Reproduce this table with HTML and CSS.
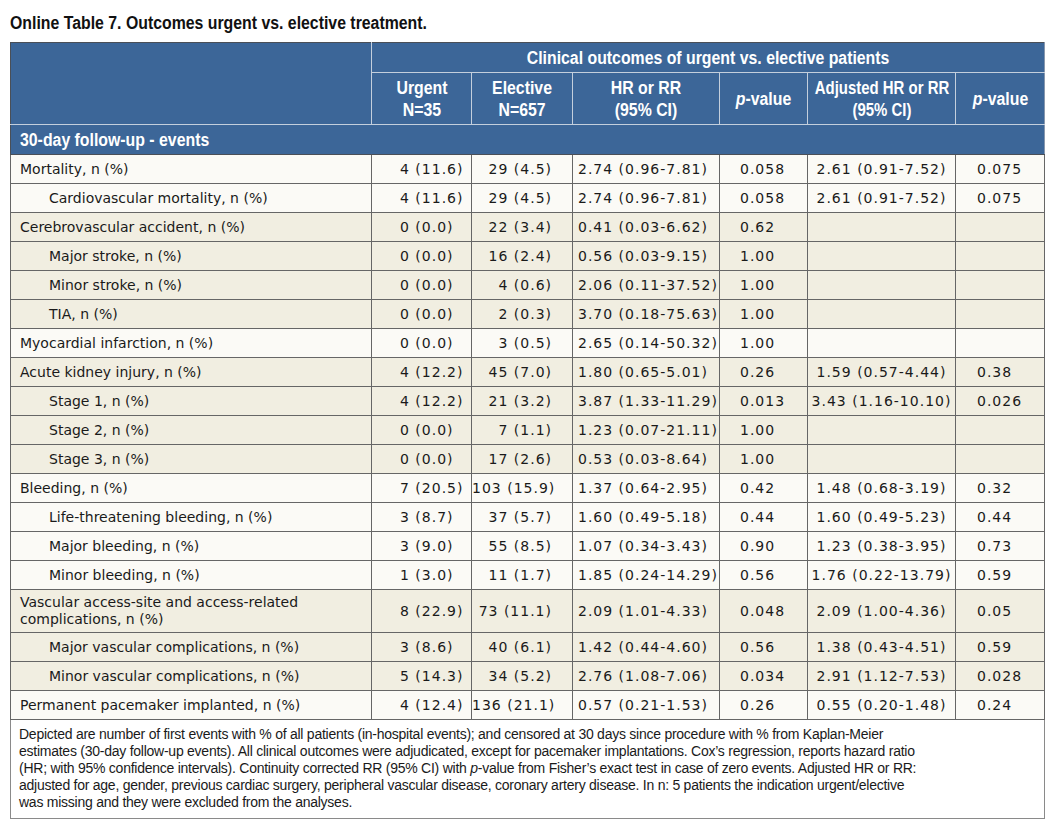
FILE: index.html
```html
<!DOCTYPE html>
<html lang="en">
<head>
<meta charset="utf-8">
<title>Online Table 7</title>
<link rel="stylesheet" href="styles.css">
</head>
<body>
<h1 class="title"><span class="cnd cnd-left">Online Table 7. Outcomes urgent vs. elective treatment.</span></h1>
<table class="outcomes">
  <colgroup>
    <col class="c-label"><col class="c-urg"><col class="c-ele"><col class="c-hr"><col class="c-p"><col class="c-adj"><col class="c-p2">
  </colgroup>
  <thead>
    <tr class="h1">
      <th rowspan="2" class="h-blank"></th>
      <th colspan="6" class="h-group"><span class="cnd">Clinical outcomes of urgent vs. elective patients</span></th>
    </tr>
    <tr class="h2">
      <th><span class="cnd">Urgent<br>N=35</span></th>
      <th><span class="cnd">Elective<br>N=657</span></th>
      <th><span class="cnd">HR or RR<br>(95% CI)</span></th>
      <th><span class="cnd"><i>p</i>-value</span></th>
      <th><span class="cnd cnd-tight">Adjusted HR or RR<br>(95% CI)</span></th>
      <th class="h-last"><span class="cnd"><i>p</i>-value</span></th>
    </tr>
  </thead>
  <tbody>
    <tr class="section"><td colspan="7"><span class="cnd cnd-left">30-day follow-up - events</span></td></tr>

    <tr class="light"><td class="lbl">Mortality, n (%)</td><td class="urg">4 (11.6)</td><td class="ele">29 (4.5)</td><td class="hr">2.74 (0.96-7.81)</td><td class="pv">0.058</td><td class="adj">2.61 (0.91-7.52)</td><td class="pv2">0.075</td></tr>
    <tr class="light"><td class="lbl sub">Cardiovascular mortality, n (%)</td><td class="urg">4 (11.6)</td><td class="ele">29 (4.5)</td><td class="hr">2.74 (0.96-7.81)</td><td class="pv">0.058</td><td class="adj">2.61 (0.91-7.52)</td><td class="pv2">0.075</td></tr>

    <tr class="tint"><td class="lbl">Cerebrovascular accident, n (%)</td><td class="urg">0 (0.0)</td><td class="ele">22 (3.4)</td><td class="hr">0.41 (0.03-6.62)</td><td class="pv">0.62</td><td class="adj"></td><td class="pv2"></td></tr>
    <tr class="tint"><td class="lbl sub">Major stroke, n (%)</td><td class="urg">0 (0.0)</td><td class="ele">16 (2.4)</td><td class="hr">0.56 (0.03-9.15)</td><td class="pv">1.00</td><td class="adj"></td><td class="pv2"></td></tr>
    <tr class="tint"><td class="lbl sub">Minor stroke, n (%)</td><td class="urg">0 (0.0)</td><td class="ele">4 (0.6)</td><td class="hr">2.06 (0.11-37.52)</td><td class="pv">1.00</td><td class="adj"></td><td class="pv2"></td></tr>
    <tr class="tint"><td class="lbl sub">TIA, n (%)</td><td class="urg">0 (0.0)</td><td class="ele">2 (0.3)</td><td class="hr">3.70 (0.18-75.63)</td><td class="pv">1.00</td><td class="adj"></td><td class="pv2"></td></tr>

    <tr class="light"><td class="lbl">Myocardial infarction, n (%)</td><td class="urg">0 (0.0)</td><td class="ele">3 (0.5)</td><td class="hr">2.65 (0.14-50.32)</td><td class="pv">1.00</td><td class="adj"></td><td class="pv2"></td></tr>

    <tr class="tint"><td class="lbl">Acute kidney injury, n (%)</td><td class="urg">4 (12.2)</td><td class="ele">45 (7.0)</td><td class="hr">1.80 (0.65-5.01)</td><td class="pv">0.26</td><td class="adj">1.59 (0.57-4.44)</td><td class="pv2">0.38</td></tr>
    <tr class="tint"><td class="lbl sub">Stage 1, n (%)</td><td class="urg">4 (12.2)</td><td class="ele">21 (3.2)</td><td class="hr">3.87 (1.33-11.29)</td><td class="pv">0.013</td><td class="adj">3.43 (1.16-10.10)</td><td class="pv2">0.026</td></tr>
    <tr class="tint"><td class="lbl sub">Stage 2, n (%)</td><td class="urg">0 (0.0)</td><td class="ele">7 (1.1)</td><td class="hr">1.23 (0.07-21.11)</td><td class="pv">1.00</td><td class="adj"></td><td class="pv2"></td></tr>
    <tr class="tint"><td class="lbl sub">Stage 3, n (%)</td><td class="urg">0 (0.0)</td><td class="ele">17 (2.6)</td><td class="hr">0.53 (0.03-8.64)</td><td class="pv">1.00</td><td class="adj"></td><td class="pv2"></td></tr>

    <tr class="light"><td class="lbl">Bleeding, n (%)</td><td class="urg">7 (20.5)</td><td class="ele">103 (15.9)</td><td class="hr">1.37 (0.64-2.95)</td><td class="pv">0.42</td><td class="adj">1.48 (0.68-3.19)</td><td class="pv2">0.32</td></tr>
    <tr class="light"><td class="lbl sub">Life-threatening bleeding, n (%)</td><td class="urg">3 (8.7)</td><td class="ele">37 (5.7)</td><td class="hr">1.60 (0.49-5.18)</td><td class="pv">0.44</td><td class="adj">1.60 (0.49-5.23)</td><td class="pv2">0.44</td></tr>
    <tr class="light"><td class="lbl sub">Major bleeding, n (%)</td><td class="urg">3 (9.0)</td><td class="ele">55 (8.5)</td><td class="hr">1.07 (0.34-3.43)</td><td class="pv">0.90</td><td class="adj">1.23 (0.38-3.95)</td><td class="pv2">0.73</td></tr>
    <tr class="light"><td class="lbl sub">Minor bleeding, n (%)</td><td class="urg">1 (3.0)</td><td class="ele">11 (1.7)</td><td class="hr">1.85 (0.24-14.29)</td><td class="pv">0.56</td><td class="adj">1.76 (0.22-13.79)</td><td class="pv2">0.59</td></tr>

    <tr class="tint two"><td class="lbl">Vascular access-site and access-related<br>complications, n (%)</td><td class="urg">8 (22.9)</td><td class="ele">73 (11.1)</td><td class="hr">2.09 (1.01-4.33)</td><td class="pv">0.048</td><td class="adj">2.09 (1.00-4.36)</td><td class="pv2">0.05</td></tr>
    <tr class="tint"><td class="lbl sub">Major vascular complications, n (%)</td><td class="urg">3 (8.6)</td><td class="ele">40 (6.1)</td><td class="hr">1.42 (0.44-4.60)</td><td class="pv">0.56</td><td class="adj">1.38 (0.43-4.51)</td><td class="pv2">0.59</td></tr>
    <tr class="tint"><td class="lbl sub">Minor vascular complications, n (%)</td><td class="urg">5 (14.3)</td><td class="ele">34 (5.2)</td><td class="hr">2.76 (1.08-7.06)</td><td class="pv">0.034</td><td class="adj">2.91 (1.12-7.53)</td><td class="pv2">0.028</td></tr>

    <tr class="light"><td class="lbl">Permanent pacemaker implanted, n (%)</td><td class="urg">4 (12.4)</td><td class="ele">136 (21.1)</td><td class="hr">0.57 (0.21-1.53)</td><td class="pv">0.26</td><td class="adj">0.55 (0.20-1.48)</td><td class="pv2">0.24</td></tr>

    <tr class="foot"><td colspan="7">Depicted are number of first events with % of all patients (in-hospital events); and censored at 30 days since procedure with % from Kaplan-Meier<br>estimates (30-day follow-up events). All clinical outcomes were adjudicated, except for pacemaker implantations. Cox’s regression, reports hazard ratio<br>(HR; with 95% confidence intervals). Continuity corrected RR (95% CI) with <i>p</i>-value from Fisher’s exact test in case of zero events. Adjusted HR or RR:<br>adjusted for age, gender, previous cardiac surgery, peripheral vascular disease, coronary artery disease. In n: 5 patients the indication urgent/elective<br>was missing and they were excluded from the analyses.</td></tr>
  </tbody>
</table>
</body>
</html>
```

FILE: styles.css
```css
html, body {
  margin: 0;
  background: #ffffff;
}

body {
  padding: 12px 10px 0 10px;
  font-family: "DejaVu Sans", "Liberation Sans", sans-serif;
  font-size: 14px;
  color: #1a1a1a;
}

.title {
  margin: 0 0 8px 0;
  font-family: "Liberation Sans", Arial, sans-serif;
  font-weight: bold;
  font-size: 18px;
  line-height: 22px;
  color: #111;
  white-space: nowrap;
}

/* condensed display type */
.cnd {
  display: inline-block;
  transform: scaleX(0.88);
  transform-origin: center center;
  white-space: nowrap;
}
.cnd-left {
  transform-origin: left center;
}
.cnd-tight {
  transform: scaleX(0.83);
  margin: 0 -20px;
}

.outcomes {
  width: 1034px;
  table-layout: fixed;
  border-collapse: collapse;
}

.c-label { width: 361px; }
.c-urg   { width: 100px; }
.c-ele   { width: 101px; }
.c-hr    { width: 147px; }
.c-p     { width: 88px; }
.c-adj   { width: 148px; }
.c-p2    { width: 89px; }

/* header */
.outcomes th {
  background: #3c6698;
  color: #ffffff;
  font-family: "Liberation Sans", Arial, sans-serif;
  font-weight: bold;
  font-size: 18px;
  line-height: 22px;
  text-align: center;
  vertical-align: middle;
  padding: 4px 0 3px 0;
  border: 1px solid #c4cfdd;
  overflow: hidden;
}
.outcomes .h1 th {
  border-top-color: #4a4f57;
}
.outcomes .h-blank {
  border-left-color: #4a4f57;
}
.outcomes .h-group,
.outcomes .h-last {
  border-right-color: #8797ad;
}

/* section row */
.outcomes .section td {
  background: #3c6698;
  color: #ffffff;
  font-family: "Liberation Sans", Arial, sans-serif;
  font-weight: bold;
  font-size: 18px;
  line-height: 22px;
  padding: 4px 9px 3px 9px;
  border: 1px solid #4a4f57;
  border-right-color: #8797ad;
}

/* body rows */
.outcomes td {
  border: 1px solid #666666;
  line-height: 17px;
  padding: 6px 0 5px 0;
  vertical-align: middle;
  white-space: nowrap;
}
.outcomes .two td {
  padding: 4px 0 4px 0;
}

.light td { background: #fbfaf6; }
.tint td  { background: #f1eee1; }

.lbl { padding-left: 9px !important; }
.lbl.sub { padding-left: 38px !important; }

.urg, .ele, .hr, .pv, .adj, .pv2 {
  letter-spacing: 1px;
}
.urg { text-align: left; padding-left: 28px !important; }
.ele { text-align: right; padding-right: 20px !important; }
.hr  { text-align: left; padding-left: 5px !important; }
.pv  { text-align: left; padding-left: 20px !important; }
.adj { text-align: center; }
.pv2 { text-align: left; padding-left: 21px !important; }

/* footnote */
.outcomes .foot td {
  background: #ffffff;
  border: 1px solid #8a8a8a;
  font-family: "Liberation Sans", Arial, sans-serif;
  font-size: 14px;
  letter-spacing: -0.25px;
  line-height: 17px;
  padding: 6px 8px 7px 8px;
  white-space: nowrap;
}
```
